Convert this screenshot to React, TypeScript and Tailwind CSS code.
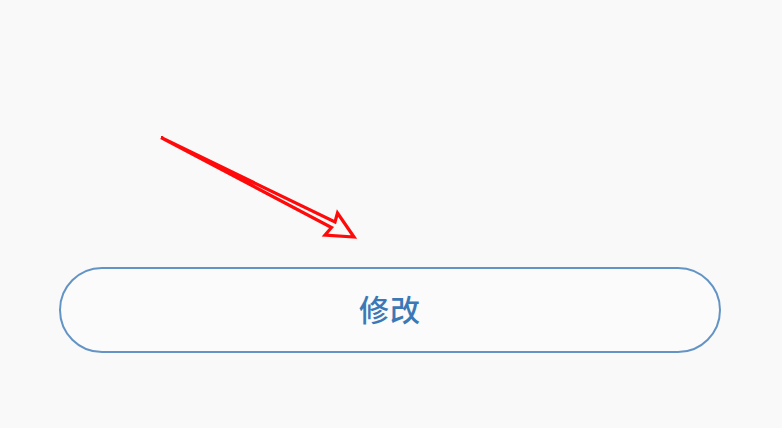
import React from "react";

export default function App() {
  return (
    <div
      className="relative w-[782px] h-[428px] bg-[#f9f9f9] overflow-hidden"
      style={{ fontFamily: '"Noto Sans CJK SC", "Noto Sans", sans-serif' }}
    >
      <svg
        className="absolute left-0 top-0 pointer-events-none"
        width="782"
        height="428"
        viewBox="0 0 782 428"
      >
        <polygon
          points="161,137.5 335,222 337.5,213 354,237 325,235 331.5,227.5"
          fill="#f9f9f9"
          stroke="#ff0a0a"
          strokeWidth="3.2"
          strokeLinejoin="miter"
        />
      </svg>
      <div className="flex flex-col pt-[267px] pl-[59px] pr-[61px]">
        <button className="h-[86px] w-full rounded-full border-2 border-[#6394c5] bg-[#fbfbfb] flex items-center justify-center pb-[4px] text-[30px] leading-none font-medium text-[#3b78b6] tracking-[1px]">
          修改
        </button>
      </div>
    </div>
  );
}
